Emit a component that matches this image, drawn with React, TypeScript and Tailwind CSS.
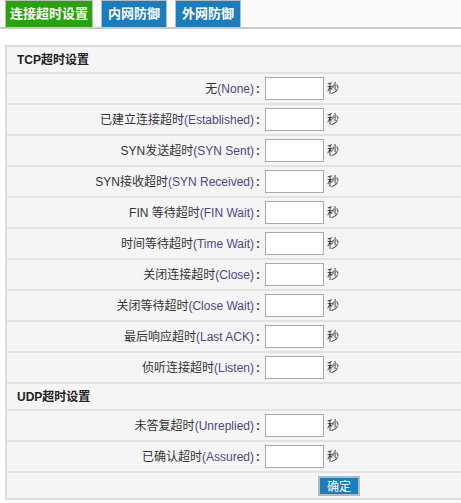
import React from 'react'

const tcpRows = [
  ['无', 'None'],
  ['已建立连接超时', 'Established'],
  ['SYN发送超时', 'SYN Sent'],
  ['SYN接收超时', 'SYN Received'],
  ['FIN 等待超时', 'FIN Wait'],
  ['时间等待超时', 'Time Wait'],
  ['关闭连接超时', 'Close'],
  ['关闭等待超时', 'Close Wait'],
  ['最后响应超时', 'Last ACK'],
  ['侦听连接超时', 'Listen'],
]

const udpRows = [
  ['未答复超时', 'Unreplied'],
  ['已确认超时', 'Assured'],
]

function Row({ cn, en }: { cn: string; en: string }) {
  return (
    <div className="flex h-[31px] items-center border-b-2 border-[#e2e2e2]">
      <div className="w-[253px] text-right text-[12px] text-[#333]">
        {cn}
        <span className="text-[#4f4688]">({en})</span>
        <span className="ml-[2px] font-bold">:</span>
      </div>
      <input className="ml-[5px] h-[23px] w-[59px] border border-[#a9a9a9] bg-white" />
      <span className="ml-[3px] text-[12px] text-[#333]">秒</span>
    </div>
  )
}

function Section({ title }: { title: string }) {
  return (
    <div className="flex h-[27px] items-center border-b-2 border-[#e2e2e2] pl-[10px] text-[12px] font-bold text-[#222]">
      {title}
    </div>
  )
}

export default function App() {
  return (
    <div className="h-[503px] w-[461px] overflow-hidden bg-white" style={{ fontFamily: '"Liberation Sans", "Noto Sans CJK SC", sans-serif' }}>
      <div className="flex h-[29px] items-end gap-[8px] border-b-2 border-[#c8c8c8] bg-[#fafafa] pl-[5px]">
        <div className="flex h-[27px] w-[88px] items-center justify-center border border-b-0 border-[#bcbcbc] bg-[#2aa20d] text-[13px] font-bold text-white">
          连接超时设置
        </div>
        <div className="flex h-[27px] w-[66px] items-center justify-center border border-b-0 border-[#bcbcbc] bg-[#1a7dbd] text-[13px] font-bold text-white">
          内网防御
        </div>
        <div className="flex h-[27px] w-[66px] items-center justify-center border border-b-0 border-[#bcbcbc] bg-[#1a7dbd] text-[13px] font-bold text-white">
          外网防御
        </div>
      </div>
      <div className="pl-[5px] pt-[16px]">
        <div className="border-2 border-r-0 border-[#dcdcdc] bg-[#f5f5f5]">
          <Section title="TCP超时设置" />
          {tcpRows.map(([cn, en]) => (
            <Row key={en} cn={cn} en={en} />
          ))}
          <Section title="UDP超时设置" />
          {udpRows.map(([cn, en]) => (
            <Row key={en} cn={cn} en={en} />
          ))}
          <div className="flex h-[25px] items-center pl-[311px]">
            <button className="h-[20px] w-[42px] border-2 border-[#b8b8b8] bg-[#1a7dbd] text-[12px] text-white">
              确定
            </button>
          </div>
        </div>
      </div>
    </div>
  )
}
